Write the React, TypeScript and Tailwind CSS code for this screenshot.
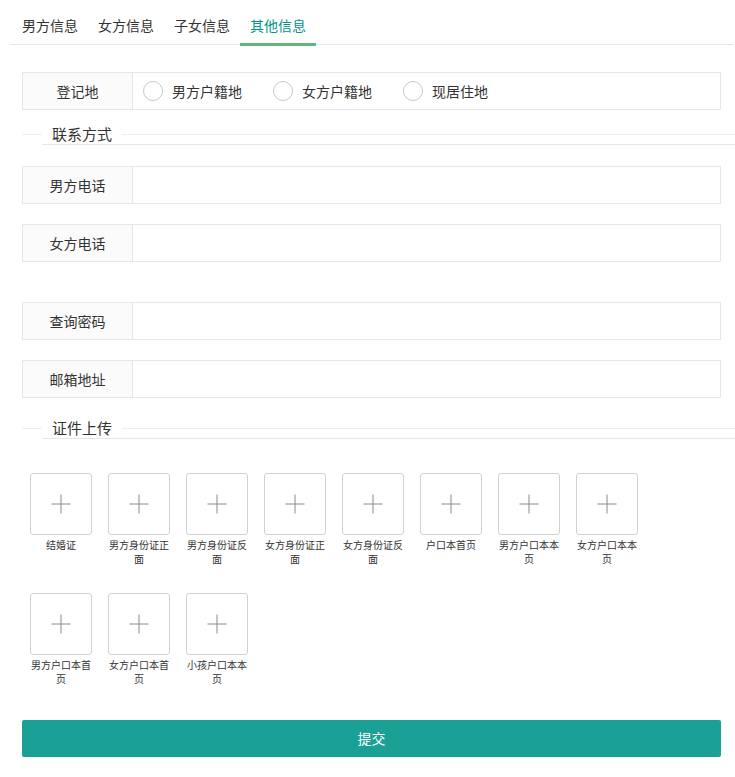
import React from 'react';

const tabs = ['男方信息', '女方信息', '子女信息', '其他信息'];
const places = ['男方户籍地', '女方户籍地', '现居住地'];
const uploads = [
  '结婚证',
  '男方身份证正面',
  '男方身份证反面',
  '女方身份证正面',
  '女方身份证反面',
  '户口本首页',
  '男方户口本本页',
  '女方户口本本页',
  '男方户口本首页',
  '女方户口本首页',
  '小孩户口本本页',
];

function Row({ label, children, className = '' }: { label: string; children?: React.ReactNode; className?: string }) {
  return (
    <div className={`flex h-[38px] border border-[#e6e6e6] ${className}`}>
      <div className="w-[110px] shrink-0 border-r border-[#e6e6e6] bg-[#fbfbfb] text-center text-[14px] leading-[36px] text-[#333]">
        {label}
      </div>
      <div className="flex flex-1 items-center">{children}</div>
    </div>
  );
}

function Section({ title, className = '' }: { title: string; className?: string }) {
  return (
    <fieldset className={`-mr-[14px] border-t border-[#eeeeee] pl-[20px] ${className}`}>
      <legend className="px-[10px] text-[15px] leading-[20px] text-[#333]">{title}</legend>
      <div className="border-t border-[#e6e6e6]" />
    </fieldset>
  );
}

export default function App() {
  return (
    <div className="min-h-[777px] bg-white font-['Noto_Sans_CJK_SC','Noto_Sans',sans-serif] text-[#333]">
      {/* tabs */}
      <div className="ml-[10px] mr-[2px] flex h-[45px] border-b border-[#e6e6e6] pl-[2px]">
        {tabs.map((t, i) => (
          <div
            key={t}
            className={`relative h-[44px] px-[10px] pt-[6px] text-[14px] leading-[38px] ${
              i === 3 ? 'text-[#009688]' : 'text-[#333]'
            }`}
          >
            {t}
            {i === 3 && <div className="absolute bottom-[-2px] left-0 right-0 h-[3px] bg-[#5fb878]" />}
          </div>
        ))}
      </div>

      <div className="ml-[22px] mr-[14px]">
        <Row label="登记地" className="mt-[27px]">
          <div className="flex items-center gap-[31px] pl-[10px]">
            {places.map((p) => (
              <label key={p} className="flex items-center gap-[9px] text-[14px] text-[#333]">
                <span className="h-[20px] w-[20px] rounded-full border-[1.5px] border-[#c8c8c8]" />
                {p}
              </label>
            ))}
          </div>
        </Row>

        <Section title="联系方式" className="mt-[14px]" />

        <Row label="男方电话" className="mt-[21px]" />
        <Row label="女方电话" className="mt-[20px]" />
        <Row label="查询密码" className="mt-[40px]" />
        <Row label="邮箱地址" className="mt-[20px]" />

        <Section title="证件上传" className="mt-[20px]" />

        <div className="mt-[34px] flex flex-wrap gap-y-[27px]">
          {uploads.map((u) => (
            <div key={u} className="mx-[8px] w-[62px]">
              <div className="flex h-[62px] w-[62px] items-center justify-center rounded-[3px] border border-[#d2d2d2]">
                <svg width="20" height="20" viewBox="0 0 20 20">
                  <path d="M10 0.5V19.5M0.5 10H19.5" stroke="#8a8a8a" strokeWidth="1" />
                </svg>
              </div>
              <div className="mt-[3px] text-center text-[10px] leading-[14px] text-[#333]">{u}</div>
            </div>
          ))}
        </div>

        <button className="mt-[34px] h-[37px] w-full rounded-[2px] bg-[#1aa094] text-[14px] text-white">
          提交
        </button>
      </div>
    </div>
  );
}
